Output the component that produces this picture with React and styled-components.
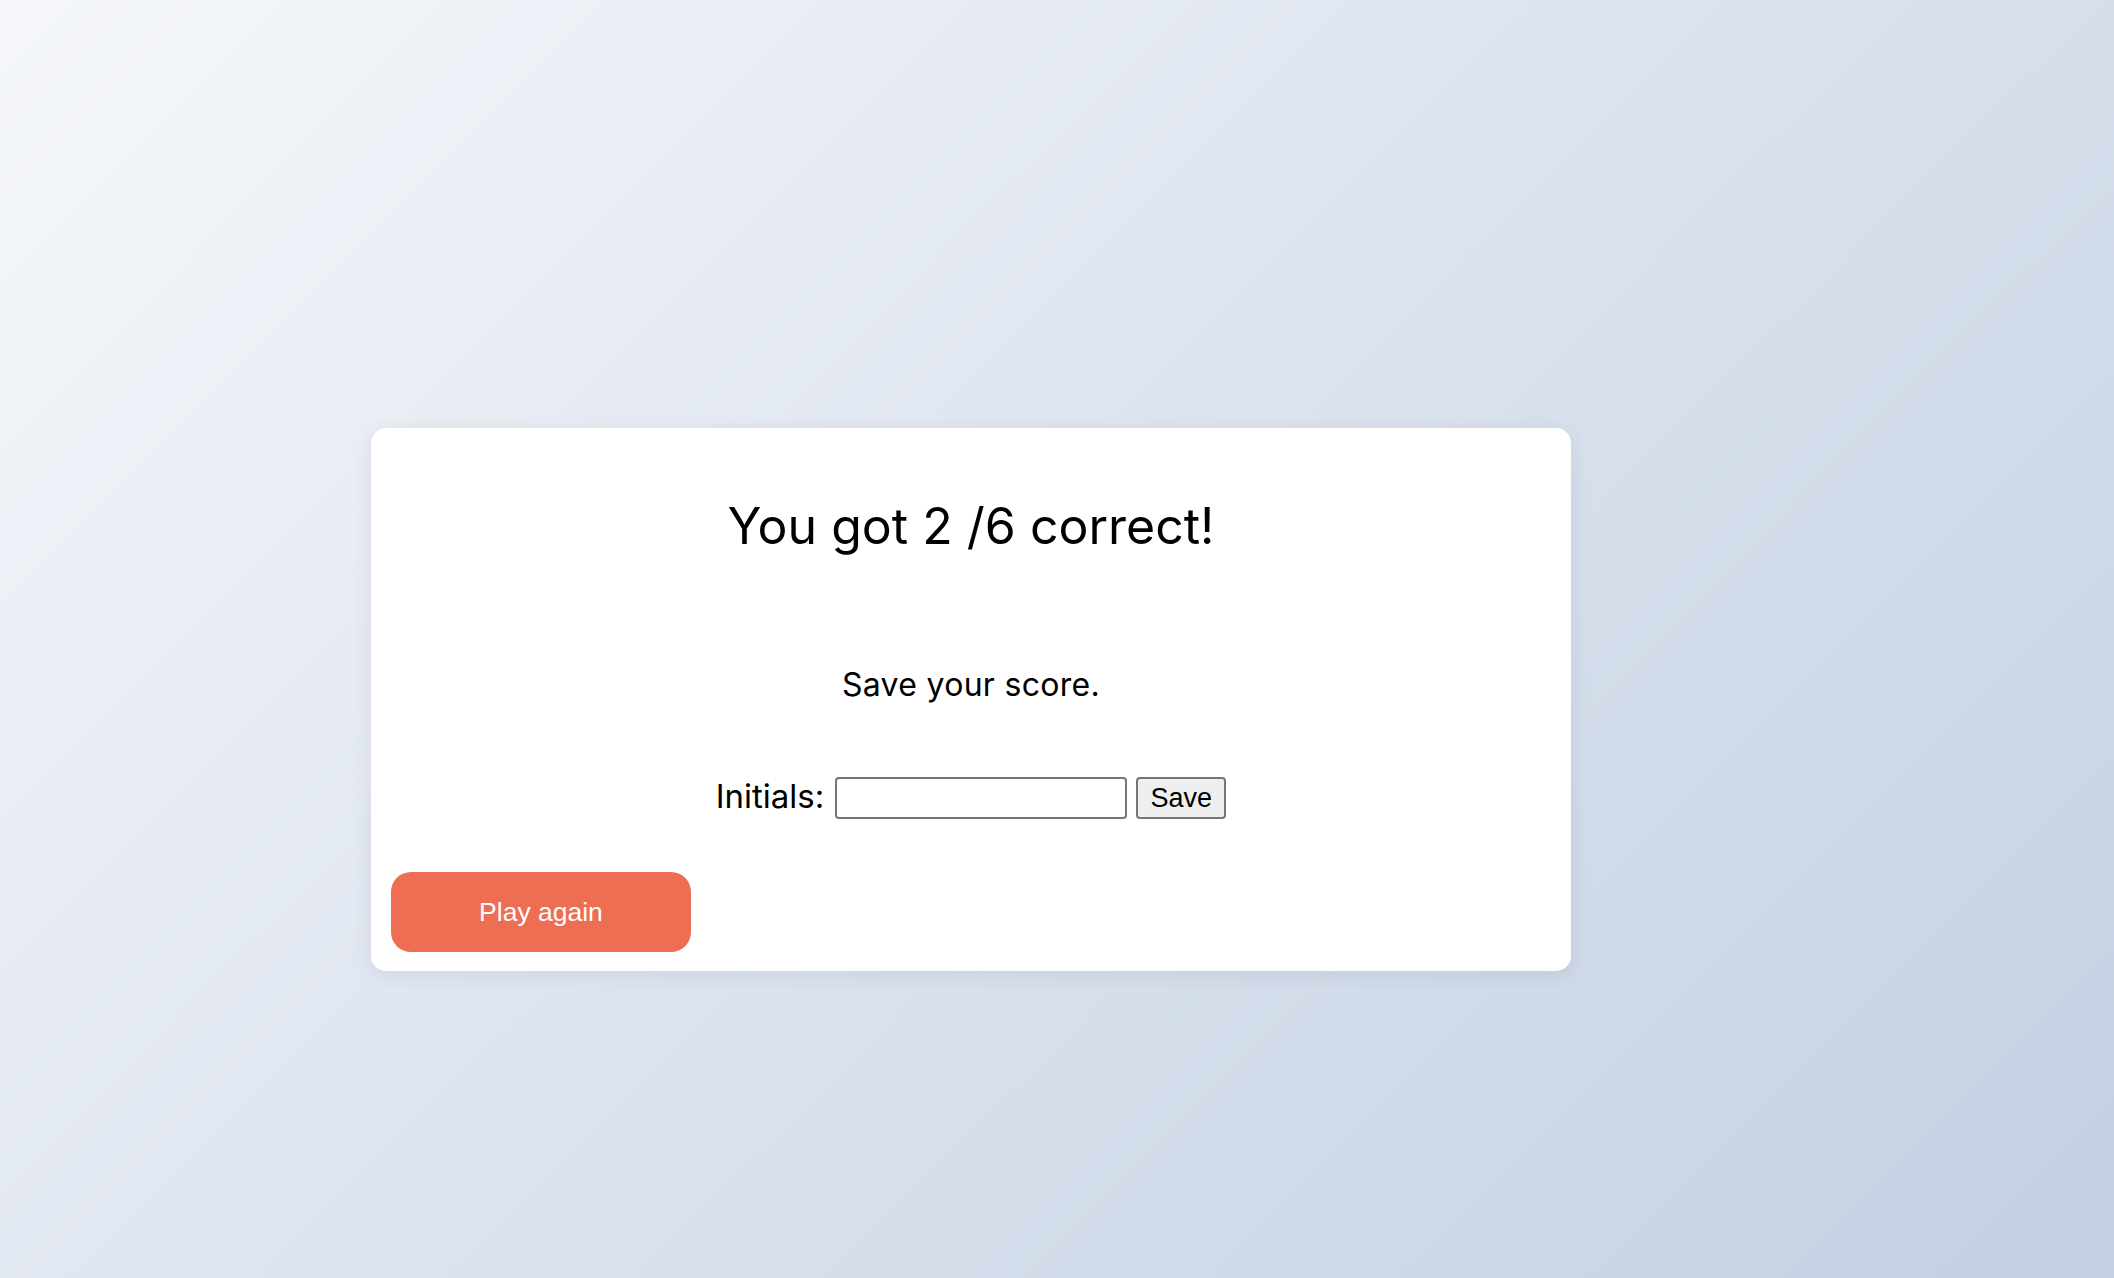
import React from "react";
import styled, { createGlobalStyle } from "styled-components";

const GlobalStyle = createGlobalStyle`
  html, body { margin: 0; padding: 0; }
  body {
    min-height: 100vh;
    background: linear-gradient(135deg, #f5f7fa 0%, #c3cfe2 100%);
    background-attachment: fixed;
    font-family: "Inter", "Liberation Sans", sans-serif;
    color: #000;
  }
  #root { min-height: 100vh; }
`;

const Page = styled.main`
  box-sizing: border-box;
  min-height: 100vh;
  padding: 428px 0 0 371px;
`;

const Card = styled.section`
  box-sizing: border-box;
  width: 1200px;
  background: #fff;
  border-radius: 15px;
  box-shadow: 0 4px 18px rgba(60, 72, 100, 0.1);
  padding: 20px 20px 19px;
  display: flex;
  flex-direction: column;
`;

const Title = styled.h1`
  margin: 53px 0 0;
  font-family: "Inter", "Liberation Sans", sans-serif;
  font-weight: 400;
  font-size: 50px;
  line-height: 1;
  text-align: center;
`;

const Subtitle = styled.p`
  margin: 118px 0 0;
  font-size: 32px;
  line-height: 1;
  letter-spacing: 0.3px;
  text-align: center;
`;

const Row = styled.form`
  margin: 76px 0 0;
  display: flex;
  justify-content: center;
  align-items: center;
`;

const Label = styled.label`
  font-size: 33px;
  line-height: 1;
  margin: 0 11px 4px 0;
`;

const TextInput = styled.input`
  box-sizing: border-box;
  width: 292px;
  height: 42px;
  border: 2px solid #767676;
  border-radius: 4px;
  background: #fff;
  padding: 0 6px;
  font-size: 22px;
  outline: none;
  margin-right: 9px;
`;

const SmallButton = styled.button`
  box-sizing: border-box;
  width: 90px;
  height: 42px;
  border: 2px solid #767676;
  border-radius: 4px;
  background: #efefef;
  font-family: "Liberation Sans", Arial, sans-serif;
  font-size: 27px;
  color: #000;
  padding: 0;
`;

const Actions = styled.div`
  margin-top: 53px;
  display: flex;
`;

const PlayButton = styled.button`
  width: 300px;
  height: 80px;
  border: none;
  border-radius: 20px;
  background: #ed6e53;
  color: #fff;
  font-family: "Liberation Sans", Arial, sans-serif;
  font-size: 26.5px;
  cursor: pointer;
`;

export default function App() {
  return (
    <>
      <GlobalStyle />
      <Page>
        <Card>
          <Title>You got 2 /6 correct!</Title>
          <Subtitle>Save your score.</Subtitle>
          <Row onSubmit={(e) => e.preventDefault()}>
            <Label htmlFor="initials">Initials:</Label>
            <TextInput id="initials" type="text" />
            <SmallButton type="submit">Save</SmallButton>
          </Row>
          <Actions>
            <PlayButton type="button">Play again</PlayButton>
          </Actions>
        </Card>
      </Page>
    </>
  );
}
